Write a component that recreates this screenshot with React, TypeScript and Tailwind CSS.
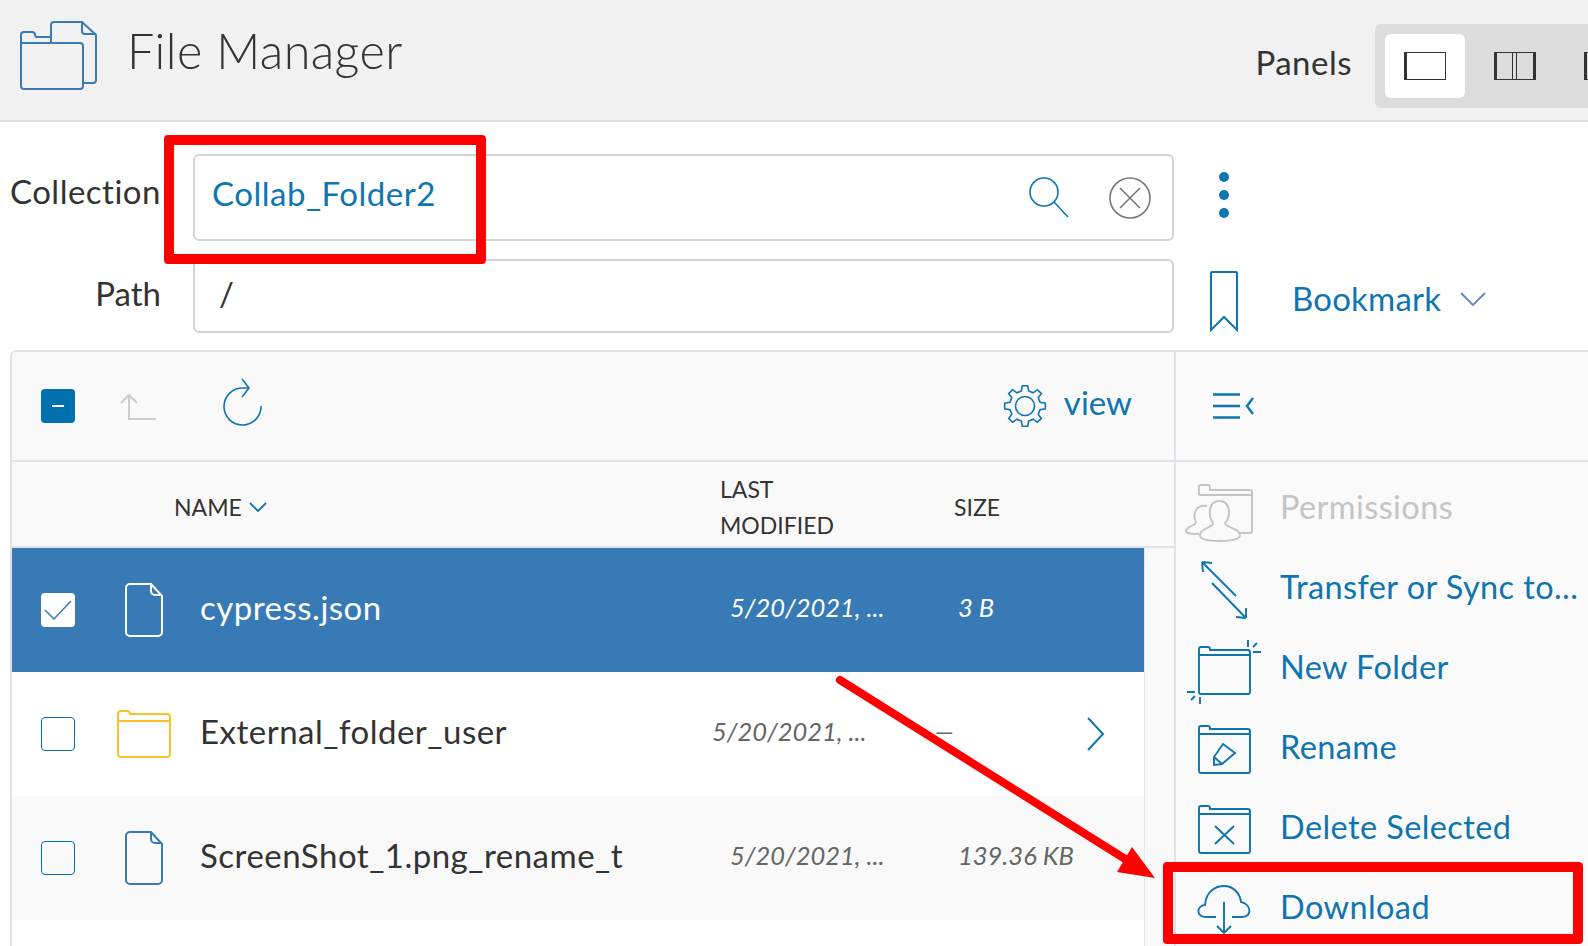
import React from "react";

const BLUE = "#0f75b0";

const gearPath = (() => {
  const cx = 22, cy = 22, teeth = 8;
  const pts: string[] = [];
  for (let i = 0; i < teeth; i++) {
    const a = (i / teeth) * Math.PI * 2 - Math.PI / 2;
    const s = (Math.PI * 2) / teeth;
    const p = (r: number, t: number) => `${(cx + r * Math.cos(a + t * s)).toFixed(2)} ${(cy + r * Math.sin(a + t * s)).toFixed(2)}`;
    pts.push(`${i === 0 ? "M" : "L"}${p(15.5, -0.3)}`, `L${p(20.5, -0.17)}`, `L${p(20.5, 0.17)}`, `L${p(15.5, 0.3)}`);
  }
  return pts.join(" ") + " Z";
})();

function Checkbox({ state }: { state: "none" | "checked" | "minus" }) {
  if (state === "minus")
    return (
      <span className="flex h-[34px] w-[34px] shrink-0 items-center justify-center rounded-[4px] bg-[#0071ae]">
        <span className="h-[2px] w-[12px] bg-white" />
      </span>
    );
  if (state === "checked")
    return (
      <span className="flex h-[34px] w-[34px] shrink-0 items-center justify-center rounded-[4px] bg-white">
        <svg width="28" height="22" viewBox="0 0 28 22" fill="none" stroke="#387ab5" strokeWidth="1.5">
          <path d="M1 11 L10 20 L27 2" />
        </svg>
      </span>
    );
  return <span className="block h-[34px] w-[34px] shrink-0 rounded-[4px] border border-[#0071ae]" />;
}

function FileIcon({ color }: { color: string }) {
  return (
    <svg width="38" height="54" viewBox="0 0 38 54" fill="none" stroke={color} strokeWidth="2">
      <path d="M5 1 H26 L37 13 V49 a4 4 0 0 1 -4 4 H5 a4 4 0 0 1 -4 -4 V5 a4 4 0 0 1 4 -4 Z" />
      <path d="M26 1 V8 a4 4 0 0 0 4 4 H37" />
    </svg>
  );
}

function YellowFolder() {
  return (
    <svg width="54" height="48" viewBox="0 0 54 48" fill="none" stroke="#fdc126" strokeWidth="2">
      <path d="M1 11 V4 a3 3 0 0 1 3 -3 h6 a3 3 0 0 1 3 3 v0 h37 a3 3 0 0 1 3 3 v37 a3 3 0 0 1 -3 3 H4 a3 3 0 0 1 -3 -3 Z" />
      <path d="M1 11 H53" />
    </svg>
  );
}

const Folder = () => (
  <path d="M13 21 V12 a2 2 0 0 1 2 -2 h7 a2 2 0 0 1 2 2 v1 h38 a2 2 0 0 1 2 2 v40 a2 2 0 0 1 -2 2 H15 a2 2 0 0 1 -2 -2 Z M13 18 H64" />
);

function SideIcon({ children, color = BLUE }: { children: React.ReactNode; color?: string }) {
  return (
    <svg width="76" height="64" viewBox="0 0 76 64" fill="none" stroke={color} strokeWidth="1.9" className="shrink-0 overflow-visible">
      {children}
    </svg>
  );
}

function Row({
  bg, text, sub, box, icon, name, date, dateClass, size, sizeClass, extra,
}: {
  bg: string; text: string; sub: string; box: "none" | "checked"; icon: React.ReactNode; name: string;
  date: string; dateClass: string; size: string; sizeClass: string; extra?: React.ReactNode;
}) {
  return (
    <div className={`flex h-[124px] items-center ${bg}`}>
      <div className="ml-[29px] w-[71px] shrink-0"><Checkbox state={box} /></div>
      <div className="flex w-[64px] shrink-0 justify-center">{icon}</div>
      <div className={`ml-[24px] -mt-[6px] w-[530px] shrink-0 leading-none ${text}`}>{name}</div>
      <div className={`-mt-[6px] shrink-0 text-[25.5px] italic tracking-normal ${sub} ${dateClass}`}>{date}</div>
      <div className={`-mt-[6px] shrink-0 text-[25.5px] italic tracking-normal ${sub} ${sizeClass}`}>{size}</div>
      {extra}
    </div>
  );
}

export default function App() {
  return (
    <div className="relative h-[946px] w-[1588px] overflow-hidden bg-white text-[33px] tracking-[0.5px] text-[#333] font-['Lato','Noto_Sans',sans-serif]">
      {/* header */}
      <header className="flex h-[122px] items-center border-b-2 border-[#ddd] bg-[#f1f1f1] pl-[20px]">
        <svg width="78" height="70" viewBox="0 0 78 70" fill="none" stroke="#3a7bb5" strokeWidth="2" className="-mt-[8px] shrink-0">
          <path d="M1 23 V14 a3 3 0 0 1 3 -3 h8 a3 3 0 0 1 3 3 l1 2 h14" />
          <path d="M1 22 H60 a3 3 0 0 1 3 3 V65 a3 3 0 0 1 -3 3 H4 a3 3 0 0 1 -3 -3 Z" />
          <path d="M31 22 V4 a3 3 0 0 1 3 -3 H62 L76 14 V59 a3 3 0 0 1 -3 3 H63" />
          <path d="M62 1 V10 a3 3 0 0 0 3 3 H76" />
        </svg>
        <h1 className="ml-[29px] -mt-[20px] text-[48.5px] font-light leading-none tracking-[0.4px]">File Manager</h1>
        <span className="ml-auto mr-[23px] mt-[4px] leading-none">Panels</span>
        <div className="mt-[12px] flex h-[84px] w-[213px] shrink-0 items-center rounded-l-[6px] bg-[#dcdcdc] pl-[10px]">
          <span className="flex h-[64px] w-[80px] shrink-0 items-center justify-center rounded-[6px] bg-white">
            <span className="block h-[28px] w-[42px] border border-l-[3px] border-[#333]" />
          </span>
          <span className="ml-[29px] flex h-[28px] w-[42px] shrink-0 border border-l-[3px] border-r-[3px] border-[#333]">
            <span className="ml-[15px] block h-full w-[5px] border-x border-[#333]" />
          </span>
          <span className="ml-[48px] block h-[28px] w-[20px] shrink-0 border border-l-[3px] border-[#333]" />
        </div>
      </header>

      {/* collection and path */}
      <div className="flex h-[228px] flex-col">
        <div className="mt-[32px] flex h-[87px] items-start">
          <label className="mt-[18px] w-[161px] shrink-0 text-right leading-[38px]">Collection</label>
          <div className="ml-[32px] flex h-[87px] w-[981px] shrink-0 items-center rounded-[6px] border-2 border-[#cfd4da] pl-[17px]">
            <span className="-mt-[8px] leading-none text-[#0f75b0]">Collab_Folder2</span>
            <svg width="40" height="42" viewBox="0 0 40 42" fill="none" stroke={BLUE} strokeWidth="1.6" className="ml-auto shrink-0">
              <circle cx="15" cy="15" r="14" />
              <path d="M25 25 L39 40" />
            </svg>
            <svg width="42" height="42" viewBox="0 0 42 42" fill="none" stroke="#777" strokeWidth="1.6" className="ml-[40px] mr-[21px] shrink-0">
              <circle cx="21" cy="21" r="20" />
              <path d="M11 11 L31 31 M31 11 L11 31" />
            </svg>
          </div>
          <span className="ml-[45px] mt-[18px] flex shrink-0 flex-col gap-[8px]">
            <span className="block h-[10px] w-[10px] rounded-full bg-[#0f75b0]" />
            <span className="block h-[10px] w-[10px] rounded-full bg-[#0f75b0]" />
            <span className="block h-[10px] w-[10px] rounded-full bg-[#0f75b0]" />
          </span>
        </div>
        <div className="mt-[18px] flex h-[74px] items-start">
          <label className="mt-[15px] w-[161px] shrink-0 text-right leading-[38px] tracking-normal">Path</label>
          <div className="ml-[32px] flex h-[74px] w-[981px] shrink-0 items-center rounded-[6px] border-2 border-[#cfd4da] pl-[24px] pb-[6px] leading-none">
            /
          </div>
          <svg width="28" height="61" viewBox="0 0 28 61" fill="none" stroke={BLUE} strokeWidth="2" className="ml-[36px] mt-[12px] shrink-0">
            <path d="M1 2 a1 1 0 0 1 1 -1 H26 a1 1 0 0 1 1 1 V59 L14 46 L1 59 Z" />
          </svg>
          <span className="ml-[54px] mt-[20px] leading-[38px] tracking-[0.2px] text-[#0f75b0]">Bookmark</span>
          <svg width="26" height="14" viewBox="0 0 26 14" fill="none" stroke="#5f86c0" strokeWidth="1.8" className="ml-[19px] mt-[33px] shrink-0">
            <path d="M1 1 L13 13 L25 1" />
          </svg>
        </div>
      </div>

      {/* browser panel */}
      <div className="ml-[10px] flex h-[596px] rounded-tl-[6px] border-l-2 border-t-2 border-[#dfe3e8] bg-[#f9f9f9]">
        <div className="w-[1164px] shrink-0 border-r-2 border-[#dfe3e8]">
          {/* toolbar */}
          <div className="flex h-[110px] items-center border-b-2 border-[#dfe3e8] pl-[29px]">
            <Checkbox state="minus" />
            <svg width="36" height="27" viewBox="0 0 36 27" fill="none" stroke="#ccc" strokeWidth="2" className="ml-[45px] shrink-0">
              <path d="M1 10 L9 2 L17 10 M9 2 V26 H36" />
            </svg>
            <svg width="40" height="50" viewBox="0 0 40 50" fill="none" stroke={BLUE} strokeWidth="1.6" className="ml-[67px] -mt-[6px] shrink-0">
              <path d="M38 28 A18.5 18.5 0 1 1 20 10 H26" />
              <path d="M19 1 L26 10 L19 19" />
            </svg>
            <svg width="44" height="44" viewBox="0 0 44 44" fill="none" stroke={BLUE} strokeWidth="1.6" className="ml-auto shrink-0">
              <path d={gearPath} />
              <circle cx="22" cy="22" r="9.5" />
            </svg>
            <span className="ml-[17px] mr-[42px] -mt-[8px] leading-none tracking-normal text-[#0f75b0]">view</span>
          </div>
          {/* column heads */}
          <div className="flex h-[86px] items-center border-b-2 border-[#dfe3e8] pt-[6px] text-[23px] leading-[36px] tracking-normal">
            <span className="ml-[162px] w-[75px] shrink-0">NAME</span>
            <svg width="18" height="10" viewBox="0 0 18 10" fill="none" stroke={BLUE} strokeWidth="1.8" className="shrink-0">
              <path d="M1 1 L9 9 L17 1" />
            </svg>
            <span className="ml-[453px] w-[234px] shrink-0">LAST<br />MODIFIED</span>
            <span>SIZE</span>
          </div>
          {/* file rows */}
          <div className="h-[398px] w-[1133px] border-r border-[#e5e7eb] bg-white">
            <Row
              bg="bg-[#387ab5]" text="text-white" sub="text-white" box="checked"
              icon={<FileIcon color="#ffffff" />} name="cypress.json"
              date="5/20/2021, ..." dateClass="w-[228px]" size="3 B" sizeClass="w-[130px]" />
            <Row
              bg="bg-white" text="text-[#333]" sub="text-[#666]" box="none"
              icon={<YellowFolder />} name="External_folder_user"
              date="5/20/2021, ..." dateClass="-ml-[18px] w-[223px]" size="—" sizeClass="w-[152px]"
              extra={
                <svg width="18" height="34" viewBox="0 0 18 34" fill="none" stroke={BLUE} strokeWidth="2" className="shrink-0">
                  <path d="M1 1 L16 17 L1 33" />
                </svg>
              } />
            <Row
              bg="bg-[#f9f9f9]" text="text-[#333]" sub="text-[#666]" box="none"
              icon={<FileIcon color="#387ab5" />} name="ScreenShot_1.png_rename_t"
              date="5/20/2021, ..." dateClass="w-[228px]" size="139.36 KB" sizeClass="w-[130px]" />
          </div>
        </div>

        {/* actions */}
        <div className="flex-1 bg-[#fafafa]">
          <div className="flex h-[110px] items-center border-b-2 border-[#dfe3e8] pl-[37px]">
            <svg width="42" height="26" viewBox="0 0 42 26" fill="none" stroke={BLUE} strokeWidth="2.4" className="shrink-0">
              <path d="M0 1.5 H27 M0 13 H27 M0 24.5 H27" />
              <path d="M40 5 L34 13 L40 21" />
            </svg>
          </div>
          <div className="flex flex-col pt-[6px] text-[32.5px] leading-none tracking-[0.4px] text-[#0f75b0]">
            <div className="flex h-[80px] items-center pl-[10px] text-[#c4c4c4]">
              <SideIcon color="#c4c4c4">
                <path d="M13 19 V11 a2 2 0 0 1 2 -2 h7 a2 2 0 0 1 2 2 v3 h40 a2 2 0 0 1 2 2 V55 a2 2 0 0 1 -2 2 H54 M13 19 H66" />
                <path d="M27 47 C22 40 22 25 33 25 C45 25 45 40 39 47 C39 52 54 52 54 59 C54 64 42 65 33 65 C24 65 14 64 14 59 C14 52 27 52 27 47 Z" />
                <path d="M21 30 C10 28 6 38 10 46 C10 50 0 50 0 55 C0 58 6 58 13 58" />
              </SideIcon>
              <span className="ml-[18px] -mt-[2px]">Permissions</span>
            </div>
            <div className="flex h-[80px] items-center pl-[10px]">
              <SideIcon>
                <path d="M16 6 L50 40 M16 6 L26 7 M16 6 L17 16 M26 27 L60 62 M60 62 L50 61 M60 62 V52" />
              </SideIcon>
              <span className="ml-[18px] -mt-[2px]">Transfer or Sync to...</span>
            </div>
            <div className="flex h-[80px] items-center pl-[10px]">
              <SideIcon>
                <g transform="translate(0 1)"><Folder /></g>
                <path d="M62 4 V11 M67 11 L71 7 M67 16 H75 M1 56 H9 M5 64 L9 60 M14 61 V68" />
              </SideIcon>
              <span className="ml-[18px] -mt-[2px]">New Folder</span>
            </div>
            <div className="flex h-[80px] items-center pl-[10px]">
              <SideIcon>
                <Folder />
                <path d="M37 28 L49 37 L36 48 L28 49 L28 41 Z M28 41 L36 48" />
              </SideIcon>
              <span className="ml-[18px] -mt-[2px]">Rename</span>
            </div>
            <div className="flex h-[80px] items-center pl-[10px]">
              <SideIcon>
                <Folder />
                <path d="M29 30 L48 48 M48 30 L29 48" />
              </SideIcon>
              <span className="ml-[18px] -mt-[2px]">Delete Selected</span>
            </div>
            <div className="flex h-[80px] items-center pl-[10px]">
              <SideIcon>
                <path d="M30 41 H20 C10 41 10 30 19 29 C20 15 30 10 38 10 C48 10 54 18 55 26 C65 28 67 41 56 41 H46" />
                <path d="M38 26 V57 M31 50 L38 57 L45 50" />
              </SideIcon>
              <span className="ml-[18px] -mt-[2px]">Download</span>
            </div>
          </div>
        </div>
      </div>

      {/* annotations */}
      <div className="absolute left-[164px] top-[135px] h-[129px] w-[322px] rounded-[4px] border-[10px] border-[#ff0000]" />
      <div className="absolute left-[1163px] top-[862px] h-[82px] w-[420px] rounded-[4px] border-[10px] border-[#ff0000]" />
      <svg className="pointer-events-none absolute left-0 top-0" width="1588" height="946" viewBox="0 0 1588 946">
        <path d="M840 680 L1130 862" stroke="#ff0000" strokeWidth="8" strokeLinecap="round" />
        <polygon points="1132,847 1117,872 1155,878" fill="#ff0000" />
      </svg>
    </div>
  );
}
